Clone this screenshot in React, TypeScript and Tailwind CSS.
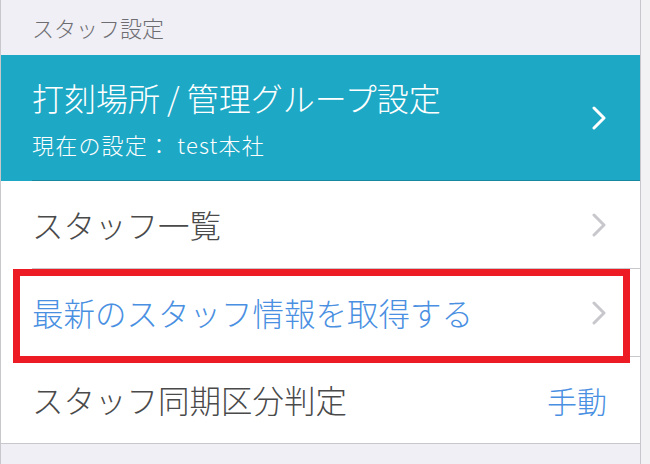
import { ReactNode } from "react";

function Chevron({ color }: { color: string }) {
  return (
    <svg width="14" height="24" viewBox="0 0 14 24" fill="none">
      <polyline
        points="2,2 12,12 2,22"
        stroke={color}
        strokeWidth="3"
        strokeLinecap="round"
        strokeLinejoin="round"
      />
    </svg>
  );
}

function Row({ children, right }: { children: ReactNode; right: ReactNode }) {
  return (
    <div className="bg-white">
      <div className="ml-[31px] h-[88px] border-b border-[#c8c7cc] flex items-center justify-between pr-[34px]">
        {children}
        {right}
      </div>
    </div>
  );
}

export default function App() {
  return (
    <div className="relative w-[650px] h-[464px] overflow-hidden bg-[#f2f2f5] font-light font-['Noto_Sans_CJK_JP',sans-serif]">
      <div className="w-[641px] h-full border-x border-[#c8c7cc] bg-[#f0eff5] flex flex-col">
        {/* Section header */}
        <div className="h-[55px] pl-[31px] flex items-center text-[22px] text-[#6d6d72]">
          スタッフ設定
        </div>

        {/* Selected row */}
        <div className="bg-[#1da8c5]">
          <div className="ml-[31px] h-[126px] border-b border-[#1887a0] flex items-start justify-between pr-[34px]">
            <div className="flex flex-col pt-[24px] text-white">
              <div className="text-[32px] leading-[36px]">打刻場所 / 管理グループ設定</div>
              <div className="mt-[15px] text-[22px] leading-[28px] tracking-[1.2px]">現在の設定： test本社</div>
            </div>
            <div className="self-center">
              <Chevron color="#ffffff" />
            </div>
          </div>
        </div>

        <Row right={<Chevron color="#c7c7cc" />}>
          <span className="text-[31.5px] text-[#4a4a4a]">スタッフ一覧</span>
        </Row>

        <Row right={<Chevron color="#c7c7cc" />}>
          <span className="text-[31.5px] text-[#4a90e2]">最新のスタッフ情報を取得する</span>
        </Row>

        <div className="bg-white border-b border-[#c8c7cc]">
          <div className="ml-[31px] h-[86px] flex items-center justify-between pr-[33px]">
            <span className="text-[31.5px] text-[#4a4a4a]">スタッフ同期区分判定</span>
            <span className="text-[30px] text-[#4a90e2]">手動</span>
          </div>
        </div>
      </div>

      {/* Highlight annotation */}
      <div className="absolute left-[13px] top-[269px] w-[617px] h-[94px] border-[7px] border-[#ed1c24]" />
    </div>
  );
}
